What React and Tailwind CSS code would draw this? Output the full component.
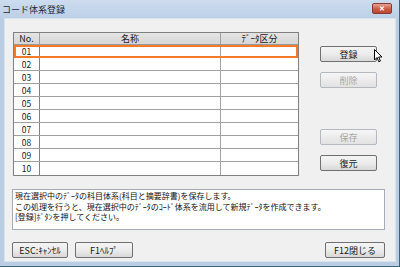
import React from 'react'

const FONT = { fontFamily: '"Noto Sans CJK JP", "Noto Sans", sans-serif' }
const ROWS = ['01', '02', '03', '04', '05', '06', '07', '08', '09', '10']

function Btn({ children, disabled, className = '' }) {
  return (
    <div
      className={`flex items-center justify-center h-[16px] rounded-[2px] border text-[9px] leading-none ${
        disabled
          ? 'border-[#b5b9bd] bg-[linear-gradient(#f6f6f6,#ececec_50%,#e2e2e2)] text-[#a8a8a8]'
          : 'border-[#707070] bg-[linear-gradient(#f4f4f4,#ececec_50%,#d8d8d8)] text-[#1a1a1a]'
      } ${className}`}
    >
      {children}
    </div>
  )
}

function Cursor() {
  return (
    <svg className="absolute left-[54px] top-[17px]" width="9" height="14" viewBox="0 0 9 14">
      <path d="M0.5 0.5 L0.5 11 L3 8.5 L4.8 12.8 L6.4 12.1 L4.7 8 L8 8 Z" fill="#fff" stroke="#000" strokeWidth="1" />
    </svg>
  )
}

export default function App() {
  return (
    <div style={FONT} className="w-[400px] h-[267px] flex flex-col bg-[#b9cde3] border-r border-b border-[#3e6577] overflow-hidden">
      {/* Title bar */}
      <div className="h-[18px] flex items-center justify-between pl-[2px] pr-[7px] bg-[linear-gradient(#cddcee,#bcd0e6)]">
        <span className="text-[9px] text-[#1c2a3a] leading-none">コード体系登録</span>
        <div className="w-[20px] h-[11px] mt-[-2px] rounded-[2px] border border-[#8a3a2e] bg-[linear-gradient(#e6a495,#cc5a44_55%,#bb4634)] flex items-center justify-center text-white text-[7px] font-bold leading-none">
          ✕
        </div>
      </div>

      {/* Client area */}
      <div className="flex-1 ml-[4px] mr-[3px] mb-[4px] bg-[#f0f0f0] border border-[#d9e4ef] pl-[7px] pr-[10px] pt-[13px] flex flex-col">
        <div className="flex">
          {/* Grid */}
          <div className="ml-[1px] w-[286px] border border-[#808080] bg-white">
            <div className="flex h-[12px] bg-[linear-gradient(#e4e4e4,#d6d6d6)] border-b border-[#9a9a9a] text-[9px] leading-none text-[#222]">
              <div className="w-[26px] border-r border-[#a0a0a0] flex items-center justify-center">No.</div>
              <div className="flex-1 border-r border-[#a0a0a0] flex items-center justify-center">名称</div>
              <div className="w-[77px] flex items-center justify-center">ﾃﾞｰﾀ区分</div>
            </div>
            {ROWS.map((n, i) => (
              <div key={n} className={`relative flex h-[13px] text-[8.5px] leading-none text-[#222] ${i < 9 ? 'border-b border-[#a0a0a0]' : ''}`}>
                <div className="w-[26px] border-r border-[#808080] flex items-center justify-center">{n}</div>
                <div className="flex-1 border-r border-[#a0a0a0]" />
                <div className="w-[77px]" />
                {i === 0 && <div className="absolute inset-x-0 top-[0px] bottom-[-1px] border-2 border-[#f47a2a]" />}
              </div>
            ))}
          </div>

          {/* Side buttons */}
          <div className="relative ml-[21px] w-[57px] pt-[14px] flex flex-col">
            <Btn>登録</Btn>
            <Btn disabled className="mt-[10px]">削除</Btn>
            <Btn disabled className="mt-[41px]">保存</Btn>
            <Btn className="mt-[10px]">復元</Btn>
            <Cursor />
          </div>
        </div>

        {/* Message */}
        <div className="mt-[13px] h-[41px] w-[373px] border border-[#a5acb5] bg-white px-[2px] pt-[1px] text-[8px] leading-[10.5px] text-[#111] whitespace-pre-line">
          {'現在選択中のﾃﾞｰﾀの科目体系(科目と摘要辞書)を保存します。\nこの処理を行うと、現在選択中のﾃﾞｰﾀのｺｰﾄﾞ体系を流用して新規ﾃﾞｰﾀを作成できます。\n[登録]ﾎﾞﾀﾝを押してください。'}
        </div>

        {/* Bottom buttons */}
        <div className="mt-[12px] flex w-[373px]">
          <Btn className="w-[56px]">ESC:ｷｬﾝｾﾙ</Btn>
          <Btn className="w-[58px] ml-[7px]">F1ﾍﾙﾌﾟ</Btn>
          <Btn className="w-[60px] ml-auto">F12閉じる</Btn>
        </div>
      </div>
    </div>
  )
}
